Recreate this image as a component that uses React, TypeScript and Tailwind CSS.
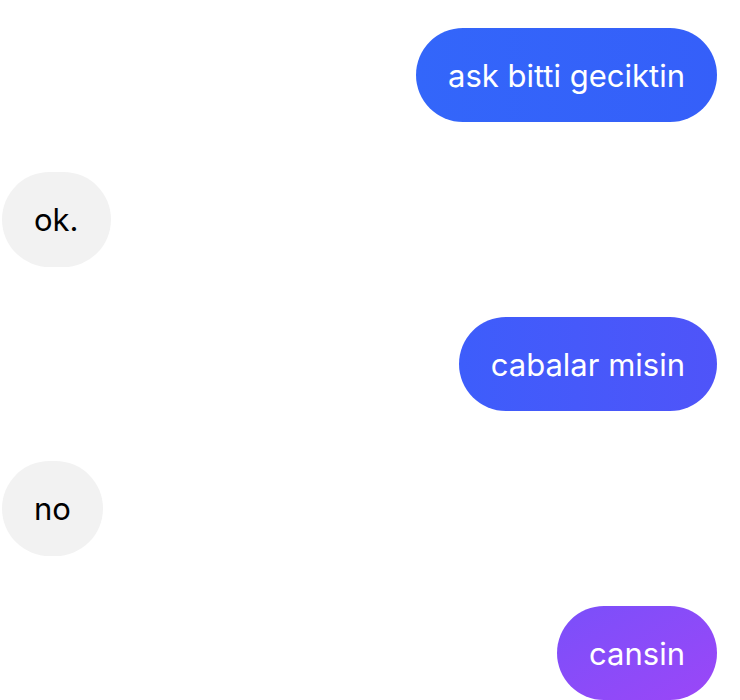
const Sent = ({ text, tone }: { text: string; tone: string }) => (
  <div className="flex justify-end pr-[23px]">
    <div className={`flex h-[94px] items-center rounded-full px-8 text-white ${tone}`}>{text}</div>
  </div>
);

const Received = ({ text }: { text: string }) => (
  <div className="flex justify-start pl-[2px]">
    <div className="flex h-[95px] items-center rounded-full bg-[#f2f2f2] px-8 text-black">{text}</div>
  </div>
);

export default function App() {
  return (
    <div
      className="flex min-h-screen flex-col gap-[50px] bg-white pt-[28px] text-[31px] leading-none"
      style={{ fontFamily: 'Inter, "Noto Sans", sans-serif' }}
    >
      <Sent text="ask bitti geciktin" tone="bg-gradient-to-r from-[#3366fa] to-[#355ff9]" />
      <Received text="ok." />
      <Sent text="cabalar misin" tone="bg-gradient-to-r from-[#3d5dfb] to-[#4f54f9]" />
      <Received text="no" />
      <Sent text="cansin" tone="bg-gradient-to-br from-[#7a4ffa] to-[#9b46f7]" />
    </div>
  );
}
